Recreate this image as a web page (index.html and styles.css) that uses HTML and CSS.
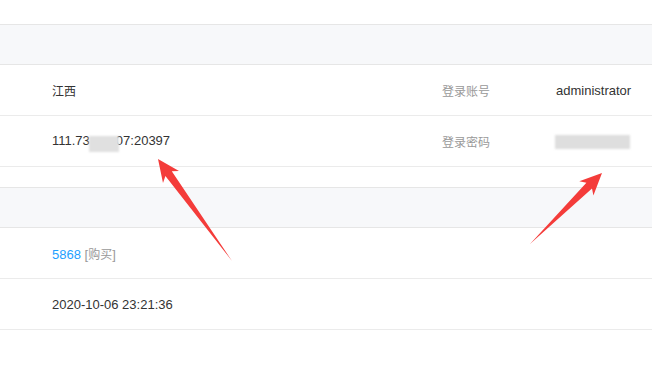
FILE: index.html
```html
<!DOCTYPE html>
<html lang="zh-CN">
<head>
  <meta charset="UTF-8" />
  <title>服务器信息</title>
  <link rel="stylesheet" href="styles.css">
</head>
<body>

  <div class="page">
    <!-- 基本信息 -->
    <div class="section">
      <div class="section-head"></div>
      <div class="row">
        <div class="val zh">江西</div>
        <div class="label zh">登录账号</div>
        <div class="val">administrator</div>
      </div>
      <div class="row">
        <div class="val">111.73<span class="mask mask-ip"></span>07:20397</div>
        <div class="label zh">登录密码</div>
        <div class="val"><span class="mask mask-pwd"></span></div>
      </div>
    </div>

    <!-- 其它信息 -->
    <div class="section">
      <div class="section-head"></div>
      <div class="row">
        <div class="val"><a class="link">5868</a> <span class="buy">[<span class="zh">购买</span>]</span></div>
      </div>
      <div class="row">
        <div class="val">2020-10-06 23:21:36</div>
      </div>
    </div>

    <!-- 标注箭头 -->
    <svg class="marks" width="652" height="369" viewBox="0 0 652 369">
      <polygon fill="#f43c3a" points="158,159 179,171 171.8,171.3 232,261 165.4,176 163,183"/>
      <polygon fill="#f43c3a" points="602,173 593.4,195.5 592,188.4 530,244 586.4,182.8 579.3,181.3"/>
    </svg>
  </div>

</body>
</html>
```

FILE: styles.css
```css
body {
  margin: 0;
  font-family: "Liberation Sans", "Noto Sans CJK SC", sans-serif;
  font-size: 13px;
  color: #333;
  background-color: #fff;
}
.page {
  position: relative;
  width: 652px;
  height: 369px;
  overflow: hidden;
  padding-top: 24px;
  box-sizing: border-box;
}
.section {
  margin-bottom: 20px;
}
.section-head {
  height: 39px;
  background-color: #f7f8fa;
  border-top: 1px solid #e6e6e6;
  border-bottom: 1px solid #e6e6e6;
}
.row {
  display: grid;
  grid-template-columns: 442px 114px 1fr;
  align-items: center;
  height: 50px;
  border-bottom: 1px solid #ebebeb;
}
.row .val:first-child {
  padding-left: 52px;
}
.zh {
  font-size: 12px;
}
.label {
  color: #999;
}
.link {
  color: #1e9fff;
}
.buy {
  color: #999;
}
.mask {
  display: inline-block;
  vertical-align: middle;
  background-color: #dcdcdc;
  filter: blur(1px);
}
.mask-ip {
  width: 30px;
  height: 16px;
  margin-left: -1px;
  margin-right: -3px;
  position: relative;
  top: 3px;
  background-color: #e0e0e0;
}
.mask-pwd {
  width: 75px;
  height: 14px;
  margin-left: -1px;
  background-color: #dedede;
}
.marks {
  position: absolute;
  left: 0;
  top: 0;
  pointer-events: none;
}
```
